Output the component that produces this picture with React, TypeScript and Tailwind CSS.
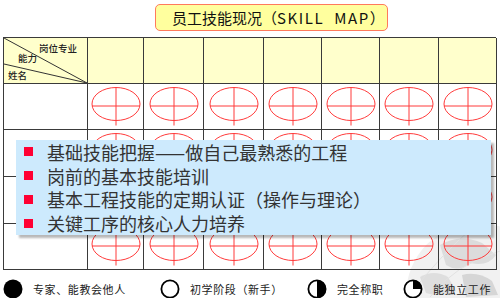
import React from "react";

const FONT = { fontFamily: '"Noto Sans CJK SC", "Noto Sans", sans-serif' };

const colClasses = "grid grid-cols-[84px_56px_60px_60px_58px_58px_59px_58px] grid-rows-[46px_46px_47px_47px_46px]";

function SkillOval() {
  return (
    <svg width="50" height="40" viewBox="0 0 50 40">
      <ellipse cx="25" cy="17" rx="24" ry="16.5" fill="none" stroke="#ff3b3b" strokeWidth="1" />
      <line x1="1" y1="19" x2="49" y2="19" stroke="#ff3b3b" strokeWidth="1" />
      <line x1="25" y1="0.5" x2="25" y2="38.5" stroke="#ff3b3b" strokeWidth="1" />
    </svg>
  );
}

function Globe() {
  return (
    <svg className="absolute left-[400px] top-[215px]" width="100" height="83" viewBox="0 0 100 83">
      <circle cx="78" cy="80" r="72" fill="#f1f1f1" />
      <path d="M40 30 Q60 18 82 28 L96 40 Q88 52 70 48 Q58 58 46 50 Z" fill="#dcdcdc" />
      <path d="M20 62 Q34 54 48 62 L56 76 Q40 83 26 78 Z" fill="#dedede" />
      <path d="M62 60 Q78 56 92 66 L98 80 L66 82 Z" fill="#d6d6d6" />
      <path d="M10 80 Q40 40 78 8" fill="none" stroke="#e2e2e2" strokeWidth="1" />
      <path d="M30 82 Q54 50 100 36" fill="none" stroke="#e2e2e2" strokeWidth="1" />
    </svg>
  );
}

function LegendIcon({ kind }: { kind: "full" | "empty" | "half" | "quarter" }) {
  return (
    <svg width="20" height="20" viewBox="0 0 20 20" className="block shrink-0">
      {kind === "full" && <circle cx="10" cy="10" r="9.5" fill="#000" />}
      {kind !== "full" && <circle cx="10" cy="10" r="8.6" fill="#fff" stroke="#000" strokeWidth="1.8" />}
      {kind === "half" && <path d="M10 1 A9 9 0 0 1 10 19 Z" fill="#000" />}
      {kind === "quarter" && <path d="M10 10 L10 1 A9 9 0 0 1 19 10 Z" fill="#000" />}
    </svg>
  );
}

const points = [
  "基础技能把握——做自己最熟悉的工程",
  "岗前的基本技能培训",
  "基本工程技能的定期认证（操作与理论）",
  "关键工序的核心人力培养",
];

const legend: { kind: "full" | "empty" | "half" | "quarter"; label: string; w: string }[] = [
  { kind: "full", label: "专家、能教会他人", w: "w-[157px]" },
  { kind: "empty", label: "初学阶段（新手）", w: "w-[147px]" },
  { kind: "half", label: "完全称职", w: "w-[96px]" },
  { kind: "quarter", label: "能独立工作", w: "w-[94px]" },
];

export default function App() {
  const bodyRows = [0, 1, 2, 3];
  const skillCols = [0, 1, 2, 3, 4, 5, 6];

  return (
    <div className="relative w-[500px] h-[298px] overflow-hidden bg-white text-[#222]" style={FONT}>
      <Globe />

      {/* 标题 */}
      <div className="relative ml-[155px] mt-[4px] flex h-[27px] w-[233px] items-center whitespace-nowrap rounded-[5px] border-[1.5px] border-[#ff7a5c] bg-[#ffff9e] pl-[16px] text-[15px] leading-none text-[#111]">
        员工技能现况（<span className="tracking-[1.6px]">SKILL&nbsp;&nbsp;MAP</span>）
      </div>

      {/* 技能表 */}
      <div className={`relative ml-[3px] mt-[6px] w-[493px] border-l border-t border-[#3a3a3a] ${colClasses}`}>
        <div className="relative border-b border-r border-[#3a3a3a] bg-[#ffffcc] text-[9.5px] font-medium leading-none">
          <svg className="absolute inset-0" width="83" height="45" viewBox="0 0 83 45">
            <line x1="0" y1="0" x2="83" y2="45" stroke="#333" strokeWidth="1" />
            <line x1="0" y1="26" x2="83" y2="45" stroke="#333" strokeWidth="1" />
          </svg>
          <span className="absolute left-[35px] top-[6px]">岗位专业</span>
          <span className="absolute left-[14px] top-[16px]">能力</span>
          <span className="absolute left-[4px] top-[33px]">姓名</span>
        </div>
        {skillCols.map((c) => (
          <div key={`h${c}`} className="border-b border-r border-[#3a3a3a] bg-[#ffffcc]" />
        ))}

        {bodyRows.map((r) => (
          <React.Fragment key={r}>
            <div className="border-b border-r border-[#3a3a3a]" />
            {skillCols.map((c) => (
              <div key={c} className="flex justify-center border-b border-r border-[#3a3a3a] pt-[3px]">
                <SkillOval />
              </div>
            ))}
          </React.Fragment>
        ))}
      </div>

      {/* 要点说明 */}
      <div className="absolute left-[16px] top-[140px] flex h-[95px] w-[475px] flex-col justify-center bg-[#cdeafd] pl-[8px] shadow-[3px_3px_2px_rgba(0,0,0,0.28)]">
        {points.map((p) => (
          <div key={p} className="flex h-[24px] items-center whitespace-nowrap text-[18px] leading-none text-[#333]">
            <span className="mr-[14px] h-[9px] w-[9px] shrink-0 bg-[#ff0033]" />
            {p}
          </div>
        ))}
      </div>

      {/* 图例 */}
      <div className="relative ml-[3px] mt-[9px] flex h-[20px] items-center whitespace-nowrap text-[11px] leading-none tracking-[0.6px] text-[#222]">
        {legend.map((l) => (
          <div key={l.label} className={`flex shrink-0 items-center gap-[10px] ${l.w}`}>
            <LegendIcon kind={l.kind} />
            <span>{l.label}</span>
          </div>
        ))}
      </div>
    </div>
  );
}
